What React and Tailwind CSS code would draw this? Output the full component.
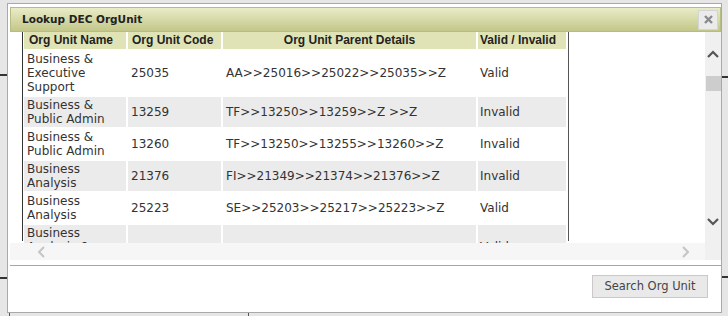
const rows = [
  { name: 'Business & Executive Support', code: '25035', parent: 'AA>>25016>>25022>>25035>>Z', status: 'Valid' },
  { name: 'Business & Public Admin', code: '13259', parent: 'TF>>13250>>13259>>Z >>Z', status: 'Invalid' },
  { name: 'Business & Public Admin', code: '13260', parent: 'TF>>13250>>13255>>13260>>Z', status: 'Invalid' },
  { name: 'Business Analysis', code: '21376', parent: 'FI>>21349>>21374>>21376>>Z', status: 'Invalid' },
  { name: 'Business Analysis', code: '25223', parent: 'SE>>25203>>25217>>25223>>Z', status: 'Valid' },
  { name: 'Business Analysis & Planning', code: '', parent: '', status: 'Valid' },
];

const Chevron = ({ dir, className }) => {
  const pts = {
    up: '1,7 6,2 11,7',
    down: '1,1 6,6 11,1',
    left: '6,1 1,6 6,11',
    right: '1,1 6,6 1,11',
  }[dir];
  const vert = dir === 'up' || dir === 'down';
  return (
    <svg width={vert ? 12 : 7} height={vert ? 8 : 12} viewBox={vert ? '0 0 12 8' : '0 0 7 12'} className={className}>
      <polyline points={pts} fill="none" stroke="currentColor" strokeWidth="2.2" />
    </svg>
  );
};

const App = () => {
  return (
    <div className="relative h-[316px] w-[728px] overflow-hidden bg-[#e6e6e6] pl-[7px] pt-[3px]">
      {/* page bits peeking out behind the dialog */}
      <div className="absolute left-0 top-[74px] h-[2px] w-[7px] bg-[#333]" />
      <div className="absolute left-0 top-[277px] h-[2px] w-[7px] bg-[#333]" />
      <div className="absolute right-0 top-[76px] h-[2px] w-[6px] bg-[#333]" />
      <div className="absolute right-0 top-[276px] h-[2px] w-[6px] bg-[#333]" />
      <div className="absolute left-[9px] top-[313px] h-[3px] w-px bg-[#555]" />
      <div className="absolute left-[248px] top-[313px] h-[3px] w-px bg-[#555]" />

      {/* Dialog */}
      <div className="relative flex h-[310px] w-[715px] flex-col border border-[#a9a9a9] bg-white pl-[2px] pt-[3px]">
        {/* Title bar */}
        <div className="flex h-[25px] shrink-0 items-center justify-between border border-[#b7bb84] bg-linear-to-b from-[#e9ecc7] to-[#c3c789] pl-[11px] pr-[2px]">
          <span className="font-['DejaVu_Sans',Verdana,sans-serif] text-[10.5px] font-bold text-[#222]">Lookup DEC OrgUnit</span>
          <button className="flex h-[20px] w-[20px] items-center justify-center border border-[#d4d4d4] bg-[#ebebeb] text-[#8a8a8a]" aria-label="Close">
            <svg width="9" height="9" viewBox="0 0 9 9">
              <path d="M1 1L8 8M8 1L1 8" stroke="currentColor" strokeWidth="2.4" />
            </svg>
          </button>
        </div>

        {/* Scrolling body */}
        <div className="flex h-[228px] shrink-0">
          <div className="flex w-[695px] flex-col">
            <div className="h-[211px] overflow-hidden pl-[12px]">
              <div className="h-full w-[547px] border-x border-l-[#333] border-r-[#555]">
                <table className="-ml-px -mt-[2px] w-[546px] table-fixed border-separate border-spacing-[2px]">
                  <thead>
                    <tr className="font-['Liberation_Sans',Arial,sans-serif] text-[12px] font-bold text-[#222]">
                      <th className="h-[17px] w-[102px] bg-[#e0e3b6] py-0 pl-[5px] text-left leading-[15px]">Org Unit Name</th>
                      <th className="w-[93px] bg-[#e0e3b6] py-0 pl-[4px] text-left leading-[15px]">Org Unit Code</th>
                      <th className="w-[253px] bg-[#e0e3b6] py-0 text-center leading-[15px]">Org Unit Parent Details</th>
                      <th className="w-[88px] bg-[#e0e3b6] py-0 pl-[2px] text-left leading-[15px]">Valid / Invalid</th>
                    </tr>
                  </thead>
                  <tbody className="font-['DejaVu_Sans',Verdana,sans-serif] text-[12px] leading-[14px] text-[#333]">
                    {rows.map((r, i) => {
                      const bg = i % 2 ? 'bg-[#ebebeb]' : 'bg-white';
                      return (
                        <tr key={i}>
                          <td className={`${bg} px-[3px] py-px align-middle`}>{r.name}</td>
                          <td className={`${bg} px-[3px] py-px align-middle`}>{r.code}</td>
                          <td className={`${bg} px-[3px] py-px align-middle whitespace-nowrap`}>{r.parent}</td>
                          <td className={`${bg} px-[2px] py-px align-middle`}>{r.status}</td>
                        </tr>
                      );
                    })}
                  </tbody>
                </table>
              </div>
            </div>
            {/* Horizontal scrollbar */}
            <div className="flex h-[17px] items-center justify-between bg-[#f6f6f6] pl-[28px] pr-[16px] text-[#c6c6c6]">
              <Chevron dir="left" />
              <Chevron dir="right" />
            </div>
          </div>
          {/* Vertical scrollbar */}
          <div className="flex w-[16px] flex-col items-center bg-[#f0f0f0] text-[#555]">
            <Chevron dir="up" className="mt-[18px]" />
            <div className="mt-[18px] h-[15px] w-[15px] bg-[#cdcdcd]" />
            <div className="flex-1" />
            <Chevron dir="down" className="mb-[34px]" />
          </div>
        </div>

        <div className="h-[5px] shrink-0" />
        <div className="h-px shrink-0 bg-[#a6a6a6]" />

        {/* Footer */}
        <div className="flex flex-1 items-start justify-end pr-[13px] pt-[9px]">
          <button className="h-[23px] w-[116px] border border-[#c9c9c9] bg-[#e9e9e9] font-['DejaVu_Sans',Tahoma,sans-serif] text-[11.5px] text-[#444]">
            Search Org Unit
          </button>
        </div>
      </div>
    </div>
  );
};

export default App;
